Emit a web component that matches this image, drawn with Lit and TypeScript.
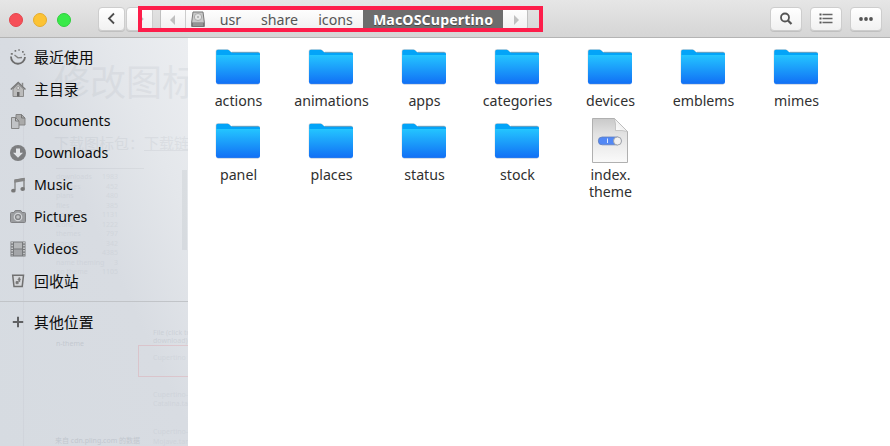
import { LitElement, html, css, svg } from "lit";
import { customElement, property } from "lit/decorators.js";

const icons: Record<string, unknown> = {
  recent: svg`<path d="M1 7.500a7 7 0 0 0 14 .5" fill="none" stroke="#6c6c6c" stroke-width="1.800"/><path d="M4.500 6 8 8.800l4-.3" fill="none" stroke="#808080" stroke-width="1.300"/><path d="M.8 4.800h2M4.600 1.800h1.600M8.300 1h1.500M12 2.800h1.700M13.700 5.500h1.500" stroke="#777" stroke-width="1.700"/>`,
  home: svg`<path d="M3 8v7.500h10.500V8L8.200 3z" fill="#bbb" stroke="#8a8a8a"/><path d="M.8 8.500 8.200 1.500l7.300 7" fill="none" stroke="#777" stroke-width="1.500"/><path d="M12.500 5V1.800" stroke="#888" stroke-width="1.500"/><path d="M7 11h2.500v4.500H7z" fill="#666"/><circle cx="8.200" cy="7" r="1.500" fill="#ddd" stroke="#888" stroke-width=".7"/>`,
  documents: svg`<path d="M6 1.500h5.500l3.500 3.500v7H6z" fill="#aaa" stroke="#858585"/><path d="M1.500 4.500h4l3.500 3.500v7.500H1.500z" fill="#c1c3c6" stroke="#858585"/><path d="M5.500 4.500V8H9M11.500 1.500V5H15" fill="none" stroke="#777"/>`,
  downloads: svg`<circle cx="8" cy="8" r="8" fill="#7d7e80"/><path d="M6 3.500h4v4.200h3L8 12.800 3 7.700h3z" fill="#e2e4e7"/>`,
  music: svg`<path d="M5 13V3l9-1.500v10" fill="none" stroke="#808080" stroke-width="1.300"/><path d="M4.400 2.700l10.200-1.700v3.100L4.400 5.800z" fill="#858585"/><ellipse cx="3.400" cy="13.700" rx="2.300" ry="1.900" fill="#777"/><ellipse cx="12.700" cy="12" rx="2.300" ry="1.900" fill="#777"/>`,
  pictures: svg`<path d="M.5 4.500q0-1 1-1H4l1.200-2h5.600l1.200 2h2.500q1 0 1 1v8q0 1-1 1h-13q-1 0-1-1z" fill="#9b9da0" stroke="#808184"/><circle cx="8" cy="8" r="3.700" fill="#808285" stroke="#d2d4d7" stroke-width="1.200"/><circle cx="8" cy="8" r="1.800" fill="#c1c3c5"/>`,
  videos: svg`<path d="M.5.500h15v15H.5z" fill="#77797b"/><path d="M4 1.500h8v6H4z" fill="#b4b6b8"/><path d="M4 8.500h8v6H4z" fill="#a3a5a8"/><path d="M2.100 1v14M14 1v14" stroke="#d3d5d8" stroke-width="1.500" stroke-dasharray="1.500 1.200"/>`,
  trash: svg`<path d="M2.700 2.300h10.800l-1.300 11.200H4z" fill="#d6d8db" stroke="#707070" stroke-width="1.500"/><path d="M6 8.500h2.200v2.200H6zM8.800 4.800h1v3.800h-1zM7.500 6.500h3.300" fill="#777" stroke="#777" stroke-width=".8"/>`,
  plus: svg`<path d="M8 2.800v10.400M2.800 8h10.400" stroke="#606163" stroke-width="2"/>`,
};

@customElement("side-entry")
class SideEntry extends LitElement {
  @property() icon = "";
  @property() label = "";
  static styles = css`
    :host { display: flex; align-items: center; height: 32px; padding-left: 10px; gap: 8px; color: #0c0c0c; }
    svg { width: 16px; height: 16px; flex: none; }
    span { white-space: nowrap; line-height: 20px; }
    :host([cjk]) span { font: 14.900px/20px "Noto Sans CJK SC", sans-serif; padding-bottom: 1px; }
  `;
  render() {
    return html`<svg viewBox="0 0 16 16">${icons[this.icon]}</svg><span>${this.label}</span>`;
  }
}

@customElement("file-tile")
class FileTile extends LitElement {
  @property() kind = "folder";
  @property() name = "";
  static styles = css`
    :host { display: flex; flex-direction: column; align-items: center; color: #303030; }
    svg { width: 48px; height: 48px; display: block; flex: none; }
    span { width: 93px; text-align: center; line-height: 17px; margin-top: 1px; padding-left: 1px; box-sizing: border-box; white-space: pre-line; flex: none; }
  `;
  render() {
    const folder = svg`
      <defs><linearGradient id="f" x2="0" y2="1"><stop stop-color="#24c5ff"/><stop offset="1" stop-color="#116ff5"/></linearGradient></defs>
      <path d="M1.700 8q0-1.800 1.800-1.800h10q1 0 1.700.7l1.500 1.500q.7.700 1.800.700H45q1 0 1 1v29H1.700z" fill="#cfd0d2"/>
      <path d="M2.200 8.500q0-1.800 1.800-1.800h9.500q1 0 1.700.7l1.300 1.400q.7.700 1.800.700h26.200q1.500 0 1.500 1.500v6H2.200z" fill="#03a4f8"/>
      <path d="M18 9.300h26.500" stroke="#5d94b2" stroke-width=".8"/>
      <path d="M2 12h44v27q0 2-2 2H4q-2 0-2-2z" fill="url(#f)"/>
      <path d="M3.500 41.300h41" stroke="#a9b8ce" stroke-width=".6"/>`;
    const file = svg`
      <defs><linearGradient id="g" x2="0" y2="1"><stop stop-color="#c9c9c9"/><stop offset=".35" stop-color="#e2e2e2"/><stop offset="1" stop-color="#fafafa"/></linearGradient>
      <linearGradient id="c" x1="0" y1="1" x2="1" y2="0"><stop stop-color="#fff"/><stop offset="1" stop-color="#e2e2e2"/></linearGradient></defs>
      <path d="M6.500 1.500h22l13 13v31h-35z" fill="url(#g)" stroke="#b0b0b0"/>
      <path d="M28.500 1.500 41.500 14.500q-5-1.500-12-1 .5-7-1-12z" fill="url(#c)" stroke="#b6b6b6" stroke-width=".7"/>
      <rect x="12.300" y="20" width="23" height="7.800" rx="3.900" fill="#5288f5" stroke="#5f7dbd" stroke-width=".8"/>
      <path d="M21.500 21.500v4.500" stroke="#dce8ff"/><circle cx="31.500" cy="24" r="4" fill="#f1f1f1" stroke="#999" stroke-width=".8"/>`;
    return html`<svg viewBox="0 0 48 48">${this.kind === "folder" ? folder : file}</svg><span>${this.name}</span>`;
  }
}

@customElement("app-root")
export class AppRoot extends LitElement {
  static styles = css`
    :host { display: flex; flex-direction: column; height: 446px; overflow: hidden; background: #fff; position: relative;
      font: 14.200px/20px "Noto Sans", "Noto Sans CJK SC", sans-serif; }
    * { box-sizing: border-box; }
    svg { display: block; }
    header { height: 38px; flex: none; display: flex; align-items: center; padding: 1px 8px 0 9px; border-bottom: 1px solid #b4b4b4;
      background: linear-gradient(#e6e6e6, #d5d5d5); }
    .lights { display: flex; gap: 10px; margin-top: 1px; }
    .light { width: 14px; height: 14px; border-radius: 50%; border: 1px solid #e4454c; background: #f64f58; }
    .light.min { background: #fcc334; border-color: #e5ac2c; }
    .light.max { background: #39ea49; border-color: #2ed03d; }
    .nav { display: flex; margin-left: 27px; gap: 1px; }
    .btn { height: 24px; display: flex; align-items: center; justify-content: center; border: 1px solid #cdcdcd; border-radius: 4px;
      background: linear-gradient(#fff, #f1f1f1); box-shadow: 0 1px 0 #c0c0c0; }
    .nav .btn { width: 27px; }
    .path { margin-left: 7px; height: 24px; width: 368px; display: flex; align-items: stretch; border: 1px solid #c0c0c0; border-radius: 4px;
      overflow: hidden; background: linear-gradient(#fff, #f0f0f0); color: #555; line-height: 22px; }
    .path > * { display: flex; align-items: center; justify-content: center; flex: none; padding-top: 1px; }
    .left { width: 25px; border-right: 1px solid #ccc; }
    .disk { width: 24px; }
    .usr { width: 41px; }
    .share { width: 57px; }
    .icons { width: 55px; }
    .current { width: 140px; background: #6d6d6d; color: #fff; font-weight: 700; text-shadow: 0 1px #444; letter-spacing: .1px; }
    .right { width: 25px; }
    .tools { display: flex; gap: 8px; margin-left: auto; }
    .tools .btn { width: 32px; }
    .frame { position: absolute; left: 138px; top: 6px; width: 405px; height: 26px; border: 4px solid #fd1d4a; }
    main { display: flex; flex: 1; min-height: 0; }
    aside { width: 188px; flex: none; position: relative; overflow: hidden;
      background: linear-gradient(65deg, #d6dbe1 0%, #d8dce2 52%, #e4e7eb 78%, #eceef1 100%); }
    nav { position: relative; padding-top: 3px; }
    .rule { height: 1px; background: #c1c4c8; margin: 4px 0 4px; }
    .ghost { position: absolute; inset: 0; white-space: pre; color: #606a78; }
    .ghost > * { position: absolute; }
    .title { left: 54px; top: 20px; font-size: 36px; line-height: 50px; opacity: .07; }
    .sub { left: 54px; top: 95px; opacity: .08; font-size: 15px; }
    .names, .counts { top: 134px; font-size: 7px; line-height: 9.550px; opacity: .07; }
    .names { left: 56px; }
    .counts { right: 70px; text-align: right; }
    .table { left: 56px; top: 130px; width: 88px; height: 1px; background: #606a78; opacity: .08; }
    .guide { left: 23px; top: 75px; width: 1px; height: 333px; background: #606a78; opacity: .05; }
    .scroll { right: 1px; top: 132px; width: 5px; height: 80px; background: #606a78; opacity: .09; }
    .theme { left: 56px; top: 301px; font-size: 7px; line-height: 9px; opacity: .17; }
    .dl { left: 153px; top: 291px; font-size: 7px; line-height: 8px; opacity: .12; }
    .files { left: 153px; top: 315px; font-size: 7px; line-height: 9.300px; opacity: .07; }
    .pink { left: 138px; top: 307px; width: 60px; height: 32px; border: 1px solid #e5747d; opacity: .22; }
    .foot { left: 55px; top: 398px; font-size: 7px; line-height: 9px; opacity: .18; }
    .grid { display: grid; grid-template-columns: repeat(7, 93px); grid-auto-rows: 74px; padding: 5px 0 0 3.500px; align-content: start; }
  `;
  render() {
    const places = [["recent", "最近使用"], ["home", "主目录"], ["documents", "Documents"], ["downloads", "Downloads"], ["music", "Music"], ["pictures", "Pictures"], ["videos", "Videos"], ["trash", "回收站"]];
    const files = ["actions", "animations", "apps", "categories", "devices", "emblems", "mimes", "panel", "places", "status", "stock"];
    return html`
      <header>
        <div class="lights"><i class="light"></i><i class="light min"></i><i class="light max"></i></div>
        <div class="nav">
          <div class="btn"><svg width="16" height="16"><path d="M10 2.500 5 7.500 10 12.500" fill="none" stroke="#4d4d4d" stroke-width="1.800"/></svg></div>
          <div class="btn"><svg width="16" height="16"><path d="M7 4.500l3.500 3.500L7 11.500" fill="none" stroke="#c0c0c0" stroke-width="1.800"/></svg></div>
        </div>
        <div class="path">
          <div class="left"><svg width="8" height="10"><path d="M6 0v10L1 5z" fill="#c0c0c0"/></svg></div>
          <div class="disk"><svg width="14" height="17" viewBox="0 0 14 17"><path d="M2 1h10l1.300 10v4.500H.7V11z" fill="#c9c9c9" stroke="#777"/><path d="M.7 11.500h12.600v4H.7z" fill="#777"/><path d="M3 12v3M5 12v3M7 12v3M9 12v3M11 12v3" stroke="#ccc" stroke-width=".7"/><ellipse cx="7" cy="6" rx="3.700" ry="3.500" fill="#e4e4e4" stroke="#aaa"/><circle cx="7" cy="6" r="1" fill="#aaa"/></svg></div>
          <div class="usr">usr</div><div class="share">share</div><div class="icons">icons</div>
          <div class="current">MacOSCupertino</div>
          <div class="right"><svg width="8" height="10"><path d="M2 0v10l5-5z" fill="#c0c0c0"/></svg></div>
        </div>
        <div class="tools">
          <div class="btn"><svg width="16" height="16"><circle cx="7" cy="6.500" r="4" fill="none" stroke="#555" stroke-width="1.800"/><path d="M10 9.500l3.500 3.500" stroke="#555" stroke-width="2.200"/></svg></div>
          <div class="btn"><svg width="16" height="16"><path d="M4.500 3.500h10M4.500 7.500h10M4.500 11.500h10" stroke="#666" stroke-width="1.500"/><path d="M1.500 3.500h2M1.500 7.500h2M1.500 11.500h2" stroke="#555" stroke-width="2.200"/></svg></div>
          <div class="btn"><svg width="16" height="16" fill="#555"><circle cx="3" cy="8" r="1.900"/><circle cx="8" cy="8" r="1.900"/><circle cx="13" cy="8" r="1.900"/></svg></div>
        </div>
      </header>
      <main>
        <aside>
          <div class="ghost">
            <div class="title">修改图标</div><div class="sub">下载图标包：<u>下载链接</u></div>
            <div class="table"></div><div class="guide"></div><div class="scroll"></div>
            <div class="names">downloads
themes
plans
files
apps
icons
themes
gnome
cursors
name theming
no theme</div>
            <div class="counts">1983
452
480
385
1131
1222
797
342
4385
3
1105</div>
            <div class="theme">n-theme</div><div class="dl">File (click to
download)</div><div class="files">Cupertino



Cupertino-
Catalina.tar


Cupertino-
Mojave.tar

Cupertino-</div>
            <div class="pink"></div><div class="foot">来自 cdn.pling.com 的数据</div>
          </div>
          <nav>
            ${places.map(([icon, label]) => html`<side-entry ?cjk=${/[^\x00-\x7f]/.test(label)} icon=${icon} label=${label}></side-entry>`)}
            <div class="rule"></div>
            <side-entry cjk icon="plus" label="其他位置"></side-entry>
          </nav>
        </aside>
        <div class="grid">
          ${files.map((name) => html`<file-tile name=${name}></file-tile>`)}
          <file-tile kind="file" name=${"index.\ntheme"}></file-tile>
        </div>
      </main>
      <div class="frame"></div>
    `;
  }
}
